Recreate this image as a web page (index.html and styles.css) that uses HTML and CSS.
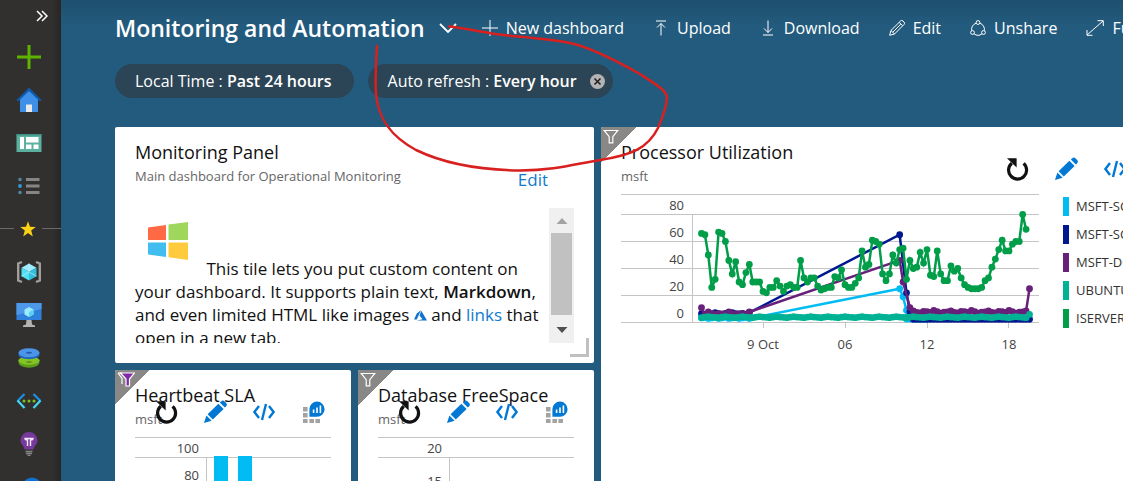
FILE: index.html
```html
<!DOCTYPE html>
<html lang="en">
<head>
    <meta charset="UTF-8">
    <meta name="viewport" content="width=device-width, initial-scale=1.0">
    <title>Monitoring and Automation</title>
    <link rel="stylesheet" href="styles.css">
</head>
<body>
    <!-- shared icons -->
    <svg class="sprite" aria-hidden="true">
        <symbol id="i-refresh" viewBox="0 0 24 24">
            <path d="M6.8 6.2A9 9 0 1 0 18.6 6.4" fill="none" stroke="#111" stroke-width="3.2"/>
            <path d="M2 1.2h9.6v9.4z" fill="#111"/>
        </symbol>
        <symbol id="i-pencil" viewBox="0 0 24 24">
            <path d="M1 23l2.4-7.4 5.2 5.2z"/>
            <path d="M4.6 14.2L15.4 3.8l5.2 5.2L9.8 19.6z"/>
            <path d="M16.8 2.6l1.2-1.2a2.6 2.6 0 0 1 3.6 0l1.4 1.4a2.6 2.6 0 0 1 0 3.6L21.8 7.6z"/>
        </symbol>
        <symbol id="i-code" viewBox="0 0 24 24">
            <path d="M7 6L2.4 12 7 18M17 6l4.6 6-4.6 6M14 4l-4 16" fill="none" stroke="#0078d4" stroke-width="2.4"/>
        </symbol>
        <symbol id="i-metrics" viewBox="0 0 24 24">
            <path d="M2 7h4.6v4.4H2zM2 13h4.6v4.4H2zM2 19h4.6v4H2zM8.4 19H13v4H8.4zM14.4 19H19v4h-4.600z" fill="#a3a3a3"/>
            <path d="M8.400 16.800V9a7.600 7.600 0 1 1 7.600 7.800z"/>
            <path d="M12.600 13V9.500M16 13V7.500M19.400 13V5.500" stroke="#fff" stroke-width="1.600"/>
        </symbol>
        <symbol id="i-filter" viewBox="0 0 16 16">
            <path d="M1.200 1.500h13.600L9.800 7.600v6.200H6.200V7.600z" fill="none" stroke="#fff" stroke-width="1.200"/>
        </symbol>
    </svg>

    <nav class="sidebar" aria-label="Portal menu">
        <button class="expand" aria-label="Expand menu">
            <svg width="12" height="12" viewBox="0 0 12 12"><path d="M1 1l5 5-5 5M6 1l5 5-5 5" fill="none" stroke="#fff" stroke-width="1.500"/></svg>
        </button>
        <a href="#" aria-label="Create a resource">
            <svg width="26" height="26" viewBox="0 0 26 26"><path d="M13 1v24M1 13h24" stroke="#5db300" stroke-width="3"/></svg>
        </a>
        <a href="#" aria-label="Home">
            <svg width="26" height="26" viewBox="0 0 26 26">
                <path d="M4 11l9-9 9 9v14H4z" fill="#3d8fe8"/>
                <path d="M0.500 13L13 0.500 25.500 13l-1.500 1.500L13 4 2 14.500z" fill="#0f5aa8"/>
                <path d="M10 17.500h6V25h-6z" fill="#e8e8e8"/>
            </svg>
        </a>
        <a href="#" aria-label="Dashboard">
            <svg width="26" height="18" viewBox="0 0 26 18">
                <path d="M0.500 0h25v18h-25z" fill="#5bb0a0"/>
                <path d="M0.500 0h25v1.500h-25z" fill="#3f8f83"/>
                <path d="M4 3h4v12H4zM10 3h12.500v5.500H10zM10 10.500h5.500V15H10zM17.500 10.500h5V15h-5z" fill="#fff"/>
            </svg>
        </a>
        <a href="#" aria-label="All services">
            <svg width="24" height="20" viewBox="0 0 24 20">
                <path d="M9 3.500h13.500M9 10h13.500M9 16.500h13.500" stroke="#858585" stroke-width="3"/>
                <circle cx="3" cy="3.500" r="1.800" fill="#4f87a5"/><circle cx="3" cy="10" r="1.900" fill="#2e9ad6"/><circle cx="3" cy="16.500" r="1.800" fill="#4f87a5"/>
            </svg>
        </a>
        <div class="favorites">
            <svg width="16" height="16" viewBox="0 0 16 16"><path d="M8 0.300l2 5.500 5.700 0.200-4.500 3.500 1.600 5.900L8 12.100l-4.800 3.300 1.600-5.900L0.300 6l5.700-0.200z" fill="#fcd116"/></svg>
        </div>
        <a href="#" aria-label="Resource groups">
            <svg width="26" height="24" viewBox="0 0 26 24">
                <path d="M6 2L2.200 3.500v17L6 22M20 2l3.800 1.500v17L20 22" fill="none" stroke="#a19f9d" stroke-width="2.400"/>
                <path d="M13 3.500l7.500 4.200L13 12 5.500 7.700z" fill="#9cebff"/>
                <path d="M5.500 7.700L13 12v8.500l-7.500-4.300z" fill="#50e0f5"/>
                <path d="M20.500 7.700L13 12v8.500l7.500-4.300z" fill="#32bedd"/>
                <path d="M5.500 16.200L13 12l7.500 4.200M13 3.500V12" fill="none" stroke="#c3f1ff" stroke-width="0.600"/>
            </svg>
        </a>
        <a href="#" aria-label="Virtual machines">
            <svg width="26" height="24" viewBox="0 0 26 24">
                <path d="M0.500 0h25v17h-25z" fill="#2f80db"/>
                <path d="M0.500 0h25v6L0.500 12z" fill="#4d98e8"/>
                <path d="M13 4l4.500 2.500v5L13 14l-4.500-2.500v-5z" fill="#9cebff"/>
                <path d="M13 9l4.500-2.500v5L13 14z" fill="#5ad0ee"/>
                <path d="M10.500 17h5l0.500 4.500 3 1V24H7v-1.500l3-1z" fill="#b3b3b3"/>
            </svg>
        </a>
        <a href="#" aria-label="SQL databases">
            <svg width="22" height="20" viewBox="0 0 22 20">
                <path d="M0.500 14v-2.500h21V14c0 7.500-21 7.500-21 0z" fill="#5a9e1c"/>
                <ellipse cx="11" cy="12.500" rx="10.500" ry="4.300" fill="#84c225"/>
                <path d="M0.500 7V4.500h21V7c0 5.500-21 5.500-21 0z" fill="#1f66bd"/>
                <ellipse cx="11" cy="4.700" rx="10.500" ry="4.500" fill="#4c94e8"/>
                <ellipse cx="11" cy="4.700" rx="3" ry="1" fill="#1f5ca8"/>
                <ellipse cx="11" cy="14" rx="3" ry="0.800" fill="#4a8514"/>
            </svg>
        </a>
        <a href="#" aria-label="Virtual networks">
            <svg width="26" height="16" viewBox="0 0 26 16">
                <path d="M8.500 1L1.500 8M17.500 1l7 7" stroke="#1c8fe0" stroke-width="2.200"/>
                <path d="M1.500 7.500l7 7.500M24.500 7.500l-7 7.500" stroke="#45d6f5" stroke-width="2.200"/>
                <circle cx="8" cy="8" r="1.500" fill="#7cc01f"/><circle cx="13" cy="8" r="1.500" fill="#7cc01f"/><circle cx="18" cy="8" r="1.500" fill="#7cc01f"/>
            </svg>
        </a>
        <a href="#" aria-label="Application insights">
            <svg width="18" height="24" viewBox="0 0 18 24">
                <path d="M9 0a8.500 8.500 0 0 1 8.500 8.500c0 4-3.500 5-4 9h-9c-0.500-4-4-5-4-9A8.500 8.500 0 0 1 9 0z" fill="#773a9b"/>
                <path d="M7.500 14V7.500c-1 0.700-2.500 0.500-2.500-1h8c0 1.500-1.500 1.700-2.500 1V14" fill="none" stroke="#f3e6fa" stroke-width="1.400"/>
                <path d="M5.500 19.500h7M6 21.500h6M7.500 23.500h3" stroke="#858585" stroke-width="1.300"/>
            </svg>
        </a>
        <a href="#" aria-label="Monitor">
            <svg width="22" height="22" viewBox="0 0 22 22"><circle cx="14" cy="11" r="9.500" fill="#0f72cc"/></svg>
        </a>
    </nav>

    <main class="content">
        <header class="topbar">
            <h1>Monitoring and Automation</h1>
            <button class="switcher" aria-label="Choose dashboard">
                <svg width="18" height="12" viewBox="0 0 18 12"><path d="M1 2l8 8 8-8" fill="none" stroke="#fff" stroke-width="1.800"/></svg>
            </button>
            <button class="command">
                <svg width="16" height="16" viewBox="0 0 16 16"><path d="M8 0v16M0 8h16"/></svg>New dashboard
            </button>
            <button class="command">
                <svg width="16" height="16" viewBox="0 0 16 16"><path d="M3 1h10M8 15.500V3.500M4 7.500l4-4 4 4"/></svg>Upload
            </button>
            <button class="command">
                <svg width="16" height="16" viewBox="0 0 16 16"><path d="M3 15h10M8 0.500v12M4 8.500l4 4 4-4"/></svg>Download
            </button>
            <button class="command">
                <svg width="16" height="16" viewBox="0 0 16 16"><path d="M0.700 15.300l1.200-4.800L11.500 1a1.800 1.800 0 0 1 2.500 0l1 1a1.800 1.800 0 0 1 0 2.500L5.500 14zM1.900 10.500l3.600 3.500M10.200 2.300l3.500 3.500M3.800 12.200l8-8"/></svg>Edit
            </button>
            <button class="command">
                <svg width="16" height="16" viewBox="0 0 16 16"><circle cx="8" cy="2.500" r="1.900"/><circle cx="2.500" cy="12.500" r="1.900"/><circle cx="13.500" cy="12.500" r="1.900"/><path d="M6.200 3.200A6.500 6.500 0 0 0 1.700 10.700M9.800 3.200A6.500 6.500 0 0 1 14.300 10.700M4 13.800a6.500 6.500 0 0 0 8 0"/></svg>Unshare
            </button>
            <button class="command">
                <svg width="18" height="16" viewBox="0 0 18 16"><path d="M1 15L17 1M11.500 0.700H17.300V6M1 10v5.300H6.500"/></svg>Full screen
            </button>
        </header>

        <div class="pills">
            <button class="pill">Local Time : <b>Past 24 hours</b></button>
            <div class="pill removable">
                <span>Auto refresh : <b>Every hour</b></span>
                <button class="remove" aria-label="Remove auto refresh">
                    <svg width="15" height="15" viewBox="0 0 15 15"><circle cx="7.500" cy="7.500" r="7.500" fill="#b3b3b3"/><path d="M4.500 4.500l6 6M10.500 4.500l-6 6" stroke="#222" stroke-width="1.600"/></svg>
                </button>
            </div>
        </div>

        <div class="board">
            <section class="tile wide">
                <h2>Monitoring Panel</h2>
                <p class="subtitle">Main dashboard for Operational Monitoring</p>
                <a class="edit" href="#">Edit</a>
                <div class="markdown">
                    <p>
                        <svg class="logo" width="67" height="67" viewBox="0 0 67 67">
                            <path d="M13 19.500l18-2.500v15H13z" fill="#ff6a45"/><path d="M33.500 16.500L53 14v18H33.500z" fill="#9fd65c"/>
                            <path d="M13 34.500h18V49l-18-2.500z" fill="#41bdf0"/><path d="M33.500 34.500H53V52l-19.500-2.700z" fill="#ffcb3d"/>
                        </svg>
                        This tile lets you put custom content on<br>
                        your dashboard. It supports plain text, <b>Markdown</b>,<br>
                        and even limited HTML like images
                        <svg width="13" height="11" viewBox="0 0 13 11"><path d="M7 0L2.800 3.600 0 9.500h2.800z" fill="#0f72cc"/><path d="M7.300 0.800L5.500 5.500l3 3.700L2.700 10.500H13z" fill="#0f72cc"/></svg>
                        and <a href="#">links</a> that<br>
                        open in a new tab.
                    </p>
                    <div class="scrollbar">
                        <svg width="12" height="25" viewBox="0 0 12 25"><path d="M0.500 16L6 10l5.500 6z" fill="#a3a3a3"/></svg>
                        <div class="thumb"></div>
                        <svg width="12" height="28" viewBox="0 0 12 28"><path d="M0.500 12L6 18l5.500-6z" fill="#505050"/></svg>
                    </div>
                </div>
                <span class="resize"></span>
            </section>

            <section class="tile tall">
                <span class="corner"><svg width="16" height="16"><use href="#i-filter"/></svg></span>
                <h2>Processor Utilization</h2>
                <p class="subtitle">msft</p>
                <div class="actions">
                    <button aria-label="Refresh"><svg><use href="#i-refresh"/></svg></button>
                    <button aria-label="Edit query"><svg><use href="#i-pencil"/></svg></button>
                    <button aria-label="View code"><svg><use href="#i-code"/></svg></button>
                    <button aria-label="Open in metrics"><svg><use href="#i-metrics"/></svg></button>
                </div>
                <div class="chart-row">
                    <svg class="chart" id="cpuChart" width="418" height="160" viewBox="0 0 418 160">
                        <path class="grid" d="M0 0.500h418M0 20.500h418M0 47.500h418M0 74.500h418M0 101.500h418M0 128.500h418M71.500 20v108M142.500 128v6M224.500 128v6M306.500 128v6M387.500 128v6"/>
                        <g class="ylabels">
                            <text x="63" y="16">80</text>
                            <text x="63" y="43">60</text>
                            <text x="63" y="70">40</text>
                            <text x="63" y="97">20</text>
                            <text x="63" y="124">0</text>
                        </g>
                        <g class="xlabels">
                            <text x="142" y="155">9 Oct</text>
                            <text x="224" y="155">06</text>
                            <text x="306" y="155">12</text>
                            <text x="388" y="155">18</text>
                        </g>
                    </svg>
                    <ul class="legend">
                        <li class="cyan">MSFT-SC</li>
                        <li class="navy">MSFT-SC</li>
                        <li class="purple">MSFT-DC</li>
                        <li class="teal">UBUNTU</li>
                        <li class="green">ISERVER</li>
                    </ul>
                </div>
            </section>

            <section class="tile">
                <span class="corner"><svg width="18" height="16" viewBox="0 0 18 16"><path d="M1 1h4M1 1l4 5.500V12" fill="none" stroke="#fff" stroke-width="1.200"/><path d="M3.500 1h14l-5 6v7H9V7z" fill="#8028a8" stroke="#fff" stroke-width="1.200"/></svg></span>
                <h2>Heartbeat SLA</h2>
                <p class="subtitle">msft</p>
                <div class="actions">
                    <button aria-label="Refresh"><svg><use href="#i-refresh"/></svg></button>
                    <button aria-label="Edit query"><svg><use href="#i-pencil"/></svg></button>
                    <button aria-label="View code"><svg><use href="#i-code"/></svg></button>
                    <button aria-label="Open in metrics"><svg><use href="#i-metrics"/></svg></button>
                </div>
                <svg class="chart" width="196" height="150" viewBox="0 0 196 150">
                    <path class="grid" d="M0 0.500h196M0 20.500h196M71.500 20v130"/>
                    <path d="M79 19h14v131H79zM103 19h14v131h-14z" fill="#00bcf2"/>
                    <g class="ylabels">
                        <text x="64" y="16">100</text>
                        <text x="64" y="43">80</text>
                    </g>
                </svg>
            </section>

            <section class="tile">
                <span class="corner"><svg width="16" height="16"><use href="#i-filter"/></svg></span>
                <h2>Database FreeSpace</h2>
                <p class="subtitle">msft</p>
                <div class="actions">
                    <button aria-label="Refresh"><svg><use href="#i-refresh"/></svg></button>
                    <button aria-label="Edit query"><svg><use href="#i-pencil"/></svg></button>
                    <button aria-label="View code"><svg><use href="#i-code"/></svg></button>
                    <button aria-label="Open in metrics"><svg><use href="#i-metrics"/></svg></button>
                </div>
                <svg class="chart" width="196" height="150" viewBox="0 0 196 150">
                    <path class="grid" d="M0 0.500h196M0 20.500h196M71.500 20v130"/>
                    <g class="ylabels">
                        <text x="64" y="16">20</text>
                        <text x="64" y="49">15</text>
                    </g>
                </svg>
            </section>
        </div>
    </main>

    <!-- hand drawn highlight -->
    <svg class="highlight" width="700" height="190" viewBox="0 0 700 190">
        <path d="M377 46C376 62 375 80 376 94C378 118 390 136 416 150C445 164 480 170 520 170.500C555 170.500 575 164 600 160C632 155 648 148 658 128C664 114 667 104 667 97C666 90 655 84 640 74C615 60 590 47 570 43C550 39 520 37 495 34C475 31 465 28 449 26.500"/>
    </svg>

    <script src="chart.js"></script>
</body>
</html>
```
FILE: styles.css
```css
* {
    box-sizing: border-box;
}

body {
    display: flex;
    height: 100vh;
    margin: 0;
    overflow: hidden;
    background: #235b7e;
    font-family: "Segoe UI", "Open Sans", "Noto Sans", sans-serif;
    color: #111;
}

h1, h2, p, ul {
    margin: 0;
    padding: 0;
    font-weight: normal;
}

b {
    font-weight: 600;
}

button {
    padding: 0;
    border: 0;
    background: none;
    color: inherit;
    font: inherit;
    cursor: pointer;
}

a {
    color: #0f7bcf;
    text-decoration: none;
}

.sprite {
    position: absolute;
    width: 0;
    height: 0;
}

/* Sidebar */
.sidebar {
    flex: none;
    width: 61px;
    background: linear-gradient(90deg, #32302f 85%, #272625);
}

.sidebar a,
.favorites {
    display: flex;
    align-items: center;
    justify-content: center;
    height: 43px;
    padding-right: 4px;
}

.expand {
    display: flex;
    align-items: center;
    justify-content: flex-end;
    width: 100%;
    height: 35px;
    padding: 0 13px 4px 0;
}

.favorites {
    gap: 6px;
    padding: 0;
}

.favorites::before,
.favorites::after {
    content: "";
    flex: 0 0 14px;
    height: 1px;
    background: #6b6a69;
}

.favorites::after {
    flex: 1;
}

/* Header */
.content {
    flex: 1;
    min-width: 0;
    padding: 11px 0 0 54px;
    overflow: hidden;
    background: linear-gradient(#1e4f6e, #235b7e 26px);
}

.topbar {
    display: flex;
    align-items: center;
    height: 34px;
    color: #fff;
    white-space: nowrap;
}

.topbar h1 {
    font-size: 23px;
    font-weight: 600;
}

.switcher {
    display: flex;
    margin: 0 25px 0 14px;
}

.command {
    display: flex;
    align-items: center;
    gap: 8px;
    margin-right: 29px;
    font-size: 16px;
}

.command svg {
    fill: none;
    stroke: #fff;
    stroke-width: 1;
}

.pills {
    display: flex;
    gap: 14px;
    margin: 19px 0 29px;
}

.pill {
    height: 34px;
    padding: 0 22px 0 20px;
    border-radius: 17px;
    background: #2c4556;
    color: #fff;
    font-size: 16px;
    white-space: nowrap;
}

.pill.removable {
    display: flex;
    align-items: center;
    gap: 13px;
    padding-right: 8px;
}

.remove {
    display: flex;
}

/* Tiles */
.board {
    display: grid;
    grid-template-columns: 236px 236px minmax(601px, 1fr);
    grid-auto-rows: minmax(236px, auto);
    gap: 7px;
}

.tile {
    position: relative;
    padding: 13px 20px 0;
    border-radius: 2px;
    background: #fff;
    overflow: hidden;
}

.wide {
    grid-column: span 2;
}

.tall {
    grid-row: span 2;
}

.tile h2 {
    position: relative;
    font-size: 18px;
    font-weight: 500;
    line-height: 24px;
    white-space: nowrap;
}

.subtitle {
    margin-bottom: 6px;
    color: #666;
    font-size: 13px;
    line-height: 24px;
}

.corner {
    position: absolute;
    top: 0;
    left: 0;
    width: 35px;
    height: 35px;
    padding: 2px;
    background: linear-gradient(135deg, #8a8886 50%, transparent 50%);
}

.corner svg {
    display: block;
}

.actions {
    position: absolute;
    top: 30px;
    right: 26px;
    display: flex;
    gap: 25px;
}

.actions button {
    display: flex;
}

.actions svg {
    width: 24px;
    height: 24px;
    fill: #0078d4;
}

/* Markdown tile */
.edit {
    position: absolute;
    top: 41px;
    right: 46px;
    font-size: 17px;
    line-height: 24px;
}

.markdown {
    display: flex;
    justify-content: space-between;
    height: 135px;
    margin-top: 20px;
    overflow: hidden;
}

.markdown p {
    font-size: 17px;
    line-height: 23px;
    white-space: nowrap;
}

.logo {
    vertical-align: baseline;
}

.scrollbar {
    display: flex;
    flex-direction: column;
    align-items: center;
    width: 25px;
    background: #f0f0f0;
}

.thumb {
    flex: 1;
    width: 21px;
    background: #c1c1c1;
}

.resize {
    position: absolute;
    right: 5px;
    bottom: 6px;
    width: 19px;
    height: 19px;
    border: solid #c0c0c0;
    border-width: 0 3px 3px 0;
}

/* Charts */
.chart-row {
    display: flex;
    gap: 24px;
}

.chart {
    flex: none;
    display: block;
}

.chart text {
    fill: #444;
    font-size: 13px;
}

.grid {
    fill: none;
    stroke: #c4c4c4;
}

.ylabels {
    text-anchor: end;
}

.xlabels {
    text-anchor: middle;
}

.legend {
    display: flex;
    flex-direction: column;
    gap: 9px;
    padding-top: 3px;
    list-style: none;
}

.legend li {
    padding-left: 7px;
    border-left: 6px solid;
    color: #333;
    font-size: 13px;
    line-height: 19px;
}

.legend .cyan { border-color: #00bcf2; }
.legend .navy { border-color: #00188f; }
.legend .purple { border-color: #68217a; }
.legend .teal { border-color: #00b294; }
.legend .green { border-color: #009e49; }

.highlight {
    position: absolute;
    top: 0;
    left: 0;
    pointer-events: none;
}

.highlight path {
    fill: none;
    stroke: #d8201f;
    stroke-width: 2.5;
    stroke-linecap: round;
}
```
FILE: chart.js
```js
const SVG_NS = 'http://www.w3.org/2000/svg';
const chart = document.getElementById('cpuChart');

// chart area: sample 0 sits at x = 80.5, value 0 at y = 128.5
const START_X = 80.5;
const SPAN = 328;
const SAMPLES = 96;
const UNIT = 1.35;

const iserver = [
    66, 65, 50, 26, 32, 67, 66, 60, 46, 36, 45, 30, 28, 37, 43, 30, 30, 30, 23, 22,
    26, 26, 31, 27, 23, 27, 28, 26, 26, 46, 33, 30, 33, 33, 27, 24, 25, 26, 26, 34,
    33, 39, 28, 26, 26, 29, 33, 53, 41, 43, 61, 60, 58, 36, 31, 36, 50, 44, 54, 55,
    32, 46, 40, 41, 52, 44, 54, 35, 34, 53, 36, 31, 31, 42, 38, 40, 33, 28, 26, 25,
    25, 25, 26, 31, 33, 41, 47, 54, 61, 53, 53, 58, 60, 60, 80, 69
];

// small repeating wobble around a base level
function flat(from, to, base, wobble) {
    const points = [];
    for (let i = from; i <= to; i++) {
        points.push([i, base + wobble[i % wobble.length]]);
    }
    return points;
}

const series = [
    {
        color: '#00bcf2',
        points: [...flat(0, 14, 3.4, [0, 0.4, -0.4]), [58, 25], [59, 19], [60, 9], ...flat(60, 66, 2.6, [0])]
    },
    {
        color: '#00188f',
        points: [...flat(0, 14, 6.5, [0, -0.5, 0.3, -0.4, 0.8]), [58, 65], [60, 22], [61, 8], ...flat(62, 96, 2.4, [0])]
    },
    {
        color: '#68217a',
        points: [[0, 11], ...flat(1, 14, 6, [0.4, 0, 1.8, 0.5, 0, 0.6]), [58, 46], [59, 30], [61, 11],
            ...flat(62, 95, 7.4, [0.6, 0, 1.6, 0.6, -0.4, 0.2, 0.4, 1.2, 0, -0.2, 0.8]), [96, 25]]
    },
    {
        color: '#00b294',
        points: [...flat(0, 95, 4, [-0.4, 0, 0.3, 0, -0.2]), [96, 6]]
    },
    {
        color: '#009e49',
        points: iserver.map((value, i) => [i, value])
    }
];

function draw(name, attributes) {
    const element = document.createElementNS(SVG_NS, name);
    Object.entries(attributes).forEach(([key, value]) => element.setAttribute(key, value));
    chart.appendChild(element);
}

series.forEach(({ color, points }) => {
    const coords = points.map(([i, value]) => [START_X + i * SPAN / SAMPLES, 128.5 - value * UNIT]);
    draw('polyline', { points: coords.join(' '), fill: 'none', stroke: color, 'stroke-width': 2.5 });
    coords.forEach(([cx, cy]) => draw('circle', { cx, cy, r: 3.4, fill: color }));
});
```
